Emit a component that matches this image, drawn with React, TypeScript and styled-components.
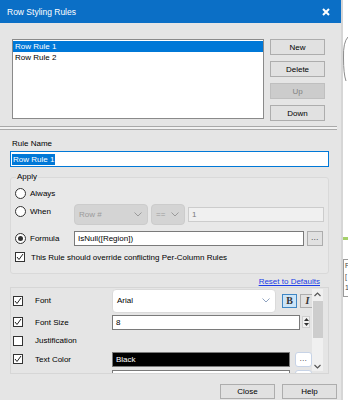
import React from 'react';
import styled, { createGlobalStyle } from 'styled-components';

const GlobalStyle = createGlobalStyle`
  html, body {
    margin: 0;
    padding: 0;
    background: #ffffff;
  }
  body {
    font-family: "Liberation Sans", Arial, sans-serif;
    font-size: 8px;
    color: #000000;
  }
  * { box-sizing: border-box; }
`;

const Screen = styled.div`
  display: flex;
  width: 348px;
  height: 400px;
  overflow: hidden;
  background: #ffffff;
`;

const Dialog = styled.div`
  flex: none;
  width: 343px;
  display: flex;
  flex-direction: column;
  background: #e5e5e5;
  border-right: 2px solid #d6d6d6;
`;

const TitleBar = styled.div`
  height: 23px;
  flex: none;
  display: flex;
  align-items: center;
  justify-content: space-between;
  padding: 0 11px 0 7px;
  background: #0b6fc6;
  color: #ffffff;
  font-size: 8.5px;
`;

const TopSection = styled.div`
  display: flex;
  padding: 16px 0 0 12px;
`;

const RuleList = styled.div`
  width: 252px;
  height: 80px;
  background: #ffffff;
  border: 1px solid #8a8a8a;
  padding-top: 1px;
`;

const ListItem = styled.div<{ $selected?: boolean }>`
  height: 11px;
  line-height: 11px;
  padding-left: 2px;
  background: ${({ $selected }) => ($selected ? '#0078d7' : 'transparent')};
  color: ${({ $selected }) => ($selected ? '#ffffff' : '#000000')};
`;

const ButtonColumn = styled.div`
  display: flex;
  flex-direction: column;
  gap: 6px;
  margin-left: 6px;
`;

const DialogButton = styled.div<{ $disabled?: boolean; $h?: number }>`
  width: 55px;
  height: ${({ $h }) => $h ?? 16}px;
  display: flex;
  align-items: center;
  justify-content: center;
  background: ${({ $disabled }) => ($disabled ? '#cccccc' : '#e1e1e1')};
  border: 1px solid ${({ $disabled }) => ($disabled ? '#bfbfbf' : '#adadad')};
  color: ${({ $disabled }) => ($disabled ? '#838383' : '#000000')};
`;

const Separator = styled.div`
  width: 337px;
  height: 4px;
  margin-top: 5px;
  border-top: 1px solid #a9a9a9;
  border-bottom: 1px solid #a9a9a9;
  background: #f2f2f2;
`;

const FieldLabel = styled.div`
  margin: 9px 0 0 12px;
  height: 10px;
  line-height: 10px;
`;

const NameInput = styled.div`
  width: 319px;
  height: 16px;
  margin: 2px 0 0 10px;
  padding: 1px 1px;
  background: #ffffff;
  border: 1px solid #0078d7;
  display: flex;
  align-items: center;
`;

const SelectedText = styled.span`
  background: #0078d7;
  color: #ffffff;
  line-height: 11px;
  padding: 0 1px;
`;

const GroupBox = styled.fieldset`
  width: 319px;
  margin: 5px 0 0 10px;
  padding: 0 0 10px 4px;
  border: 1px solid #d9d9d9;
  border-radius: 3px;
  background: #e8e8e8;
`;

const GroupLegend = styled.legend`
  height: 10px;
  line-height: 10px;
  padding: 0 1px;
  margin-left: 1px;
`;

const GroupRow = styled.div<{ $h: number; $mt: number }>`
  display: flex;
  align-items: center;
  height: ${({ $h }) => $h}px;
  margin-top: ${({ $mt }) => $mt}px;
`;

const RadioOption = styled.div<{ $lift?: number }>`
  width: 59px;
  flex: none;
  display: flex;
  align-items: center;
  gap: 4px;
  margin-bottom: ${({ $lift }) => ($lift ? $lift * 2 : 0)}px;
`;

const RadioCircle = styled.div<{ $checked?: boolean }>`
  width: 11px;
  height: 11px;
  border-radius: 50%;
  border: 1px solid #333333;
  background: #ffffff;
  display: flex;
  align-items: center;
  justify-content: center;
  &::after {
    content: '';
    width: 5px;
    height: 5px;
    border-radius: 50%;
    background: ${({ $checked }) => ($checked ? '#333333' : 'transparent')};
  }
`;

const ComboBox = styled.div<{ $w: number; $h: number; $disabled?: boolean }>`
  width: ${({ $w }) => $w}px;
  height: ${({ $h }) => $h}px;
  flex: none;
  display: flex;
  align-items: center;
  justify-content: space-between;
  padding: 0 5px 0 4px;
  border-radius: 4px;
  background: ${({ $disabled }) => ($disabled ? '#d4d4d4' : '#ffffff')};
  border: 1px solid ${({ $disabled }) => ($disabled ? '#cccccc' : '#dadada')};
  color: ${({ $disabled }) => ($disabled ? '#9b9b9b' : '#000000')};
  margin-right: 3px;
`;

const TextBox = styled.div<{ $w: number; $dark?: boolean; $disabled?: boolean }>`
  width: ${({ $w }) => $w}px;
  height: 15px;
  flex: none;
  display: flex;
  align-items: center;
  padding-left: 3px;
  background: ${({ $dark, $disabled }) => ($dark ? '#000000' : $disabled ? '#f0f0f0' : '#ffffff')};
  color: ${({ $dark, $disabled }) => ($dark ? '#ffffff' : $disabled ? '#7a7a7a' : '#000000')};
  border: 1px solid ${({ $disabled }) => ($disabled ? '#cccccc' : '#7a7a7a')};
`;

const SmallButton = styled.div<{ $w: number; $round?: boolean }>`
  width: ${({ $w }) => $w}px;
  height: 15px;
  flex: none;
  display: flex;
  align-items: center;
  justify-content: center;
  margin-left: ${({ $round }) => ($round ? 5 : 3)}px;
  background: ${({ $round }) => ($round ? '#ffffff' : '#e1e1e1')};
  border: 1px solid ${({ $round }) => ($round ? '#c7d3e6' : '#adadad')};
  border-radius: ${({ $round }) => ($round ? 3 : 0)}px;
  font-size: 7px;
  letter-spacing: 0.5px;
  padding-bottom: 2px;
`;

const CheckLine = styled.div`
  display: flex;
  align-items: center;
  gap: 6px;
`;

const CheckBox = styled.div`
  width: 10px;
  height: 10px;
  flex: none;
  border: 1px solid #333333;
  background: #ffffff;
  display: flex;
  align-items: center;
  justify-content: center;
`;

const ResetRow = styled.div`
  height: 13px;
  display: flex;
  align-items: flex-end;
  justify-content: flex-end;
  padding-right: 21px;
`;

const ResetLink = styled.span`
  color: #1a3ce6;
  text-decoration: underline;
  line-height: 10px;
`;

const PropsPanel = styled.div`
  width: 319px;
  height: 87px;
  margin-left: 10px;
  display: flex;
  border: 1px solid #d6d6d6;
  background: #e5e5e5;
`;

const PropRows = styled.div`
  flex: 1;
  overflow: hidden;
`;

const PropRow = styled.div<{ $h: number }>`
  height: ${({ $h }) => $h}px;
  display: flex;
  align-items: center;
  padding-left: 2px;
`;

const PropLabelBox = styled.div`
  display: flex;
  align-items: center;
  width: 99px;
  flex: none;
`;

const PropLabel = styled.div`
  width: 75px;
  flex: none;
  padding-left: 12px;
`;

const StyleToggle = styled.div<{ $active?: boolean; $italic?: boolean }>`
  width: 15px;
  height: 14px;
  flex: none;
  display: flex;
  align-items: center;
  justify-content: center;
  margin-left: 3px;
  font-family: "Liberation Serif", "Times New Roman", serif;
  font-weight: bold;
  font-style: ${({ $italic }) => ($italic ? 'italic' : 'normal')};
  font-size: 10px;
  color: #333333;
  background: ${({ $active }) => ($active ? '#cce4f7' : '#e1e1e1')};
  border: 1px solid ${({ $active }) => ($active ? '#3f86c4' : '#adadad')};
`;

const SpinBox = styled.div`
  width: 8px;
  height: 12px;
  margin-left: 2px;
  display: flex;
  flex-direction: column;
  justify-content: space-around;
  align-items: center;
  background: #f0f0f0;
  border: 1px solid #cfcfcf;
`;

const ScrollBar = styled.div`
  width: 11px;
  flex: none;
  margin: 1px 5px 2px 0;
  background: #f0f0f0;
  display: flex;
  flex-direction: column;
  align-items: center;
`;

const ScrollThumb = styled.div`
  width: 10px;
  height: 37px;
  margin-top: 2px;
  background: #cdcdcd;
`;

const ScrollArrow = styled.div<{ $bottom?: boolean }>`
  height: 10px;
  display: flex;
  align-items: center;
  justify-content: center;
  margin-top: ${({ $bottom }) => ($bottom ? 'auto' : '0')};
`;

const BottomBar = styled.div`
  display: flex;
  justify-content: flex-end;
  gap: 7px;
  margin-top: 10px;
  padding-right: 4px;
`;

const Backdrop = styled.div`
  flex: 1;
  display: flex;
  flex-direction: column;
`;

const BackCurve = styled.svg`
  margin-top: 36px;
`;

const BackGreen = styled.div`
  margin-top: 155px;
  height: 3px;
  width: 5px;
  background: #a5d06a;
`;

const BackBox = styled.div`
  margin-top: 19px;
  height: 38px;
  border: 1px solid #9a9a9a;
  border-right: none;
  background: #ffffff;
  color: #444444;
  font-size: 7px;
  line-height: 11px;
  padding: 0 0 0 1px;
  overflow: hidden;
`;

const Chevron = ({ color = '#8fa3c0' }: { color?: string }) => (
  <svg width="8" height="5" viewBox="0 0 8 5">
    <path d="M0.5 0.5 L4 4 L7.5 0.5" fill="none" stroke={color} strokeWidth="1" />
  </svg>
);

const Check = () => (
  <svg width="8" height="8" viewBox="0 0 8 8">
    <path d="M1 4 L3 6.5 L7 1" fill="none" stroke="#222" strokeWidth="1" />
  </svg>
);

const CloseX = () => (
  <svg width="8" height="8" viewBox="0 0 8 8">
    <path d="M1 1 L7 7 M7 1 L1 7" stroke="#ffffff" strokeWidth="2" />
  </svg>
);

const Tri = ({ up }: { up?: boolean }) => (
  <svg width="5" height="3" viewBox="0 0 5 3">
    <path d={up ? 'M0 3 L2.5 0 L5 3 Z' : 'M0 0 L2.5 3 L5 0 Z'} fill="#333" />
  </svg>
);

const ScrollChevron = ({ up }: { up?: boolean }) => (
  <svg width="7" height="5" viewBox="0 0 7 5">
    <path d={up ? 'M0.5 4 L3.5 1 L6.5 4' : 'M0.5 1 L3.5 4 L6.5 1'} fill="none" stroke="#555" strokeWidth="1.2" />
  </svg>
);

const App: React.FC = () => {
  return (
    <>
      <GlobalStyle />
      <Screen>
        <Dialog>
          <TitleBar>
            <span>Row Styling Rules</span>
            <CloseX />
          </TitleBar>

          <TopSection>
            <RuleList>
              <ListItem $selected>Row Rule 1</ListItem>
              <ListItem>Row Rule 2</ListItem>
            </RuleList>
            <ButtonColumn>
              <DialogButton>New</DialogButton>
              <DialogButton>Delete</DialogButton>
              <DialogButton $disabled>Up</DialogButton>
              <DialogButton>Down</DialogButton>
            </ButtonColumn>
          </TopSection>

          <Separator />

          <FieldLabel>Rule Name</FieldLabel>
          <NameInput>
            <SelectedText>Row Rule 1</SelectedText>
          </NameInput>

          <GroupBox>
            <GroupLegend>Apply</GroupLegend>
            <GroupRow $h={14} $mt={4}>
              <RadioOption>
                <RadioCircle />
                <span>Always</span>
              </RadioOption>
            </GroupRow>
            <GroupRow $h={22} $mt={3}>
              <RadioOption $lift={3}>
                <RadioCircle />
                <span>When</span>
              </RadioOption>
              <ComboBox $w={74} $h={21} $disabled>
                <span>Row #</span>
                <Chevron color="#9a9a9a" />
              </ComboBox>
              <ComboBox $w={34} $h={21} $disabled>
                <span>==</span>
                <Chevron color="#9a9a9a" />
              </ComboBox>
              <TextBox $w={136} $disabled>1</TextBox>
            </GroupRow>
            <GroupRow $h={15} $mt={6}>
              <RadioOption>
                <RadioCircle $checked />
                <span>Formula</span>
              </RadioOption>
              <TextBox $w={230}>IsNull([Region])</TextBox>
              <SmallButton $w={16}>...</SmallButton>
            </GroupRow>
            <GroupRow $h={12} $mt={5}>
              <CheckLine>
                <CheckBox>
                  <Check />
                </CheckBox>
                <span>This Rule should override conflicting Per-Column Rules</span>
              </CheckLine>
            </GroupRow>
          </GroupBox>

          <ResetRow>
            <ResetLink>Reset to Defaults</ResetLink>
          </ResetRow>

          <PropsPanel>
            <PropRows>
              <PropRow $h={25}>
                <PropLabelBox>
                  <CheckBox>
                    <Check />
                  </CheckBox>
                  <PropLabel>Font</PropLabel>
                </PropLabelBox>
                <ComboBox $w={164} $h={24}>
                  <span>Arial</span>
                  <Chevron />
                </ComboBox>
                <StyleToggle $active>B</StyleToggle>
                <StyleToggle $italic>I</StyleToggle>
              </PropRow>
              <PropRow $h={18}>
                <PropLabelBox>
                  <CheckBox>
                    <Check />
                  </CheckBox>
                  <PropLabel>Font Size</PropLabel>
                </PropLabelBox>
                <TextBox $w={188}>8</TextBox>
                <SpinBox>
                  <Tri up />
                  <Tri />
                </SpinBox>
              </PropRow>
              <PropRow $h={19}>
                <PropLabelBox>
                  <CheckBox />
                  <PropLabel>Justification</PropLabel>
                </PropLabelBox>
              </PropRow>
              <PropRow $h={18}>
                <PropLabelBox>
                  <CheckBox>
                    <Check />
                  </CheckBox>
                  <PropLabel>Text Color</PropLabel>
                </PropLabelBox>
                <TextBox $w={178} $dark>Black</TextBox>
                <SmallButton $w={17} $round>...</SmallButton>
              </PropRow>
              <PropRow $h={18}>
                <PropLabelBox />
                <TextBox $w={178} />
                <SmallButton $w={17} $round />
              </PropRow>
            </PropRows>
            <ScrollBar>
              <ScrollArrow>
                <ScrollChevron up />
              </ScrollArrow>
              <ScrollThumb />
              <ScrollArrow $bottom>
                <ScrollChevron />
              </ScrollArrow>
            </ScrollBar>
          </PropsPanel>

          <BottomBar>
            <DialogButton $h={15}>Close</DialogButton>
            <DialogButton $h={15}>Help</DialogButton>
          </BottomBar>
        </Dialog>

        <Backdrop>
          <BackCurve width="5" height="46" viewBox="0 0 5 46">
            <path d="M5 1 Q0 6 0.5 22 Q0.5 38 3 45" fill="none" stroke="#8c8c8c" strokeWidth="1" />
          </BackCurve>
          <BackGreen />
          <BackBox>
            <div>F</div>
            <div>[</div>
            <div>1</div>
          </BackBox>
        </Backdrop>
      </Screen>
    </>
  );
};

export default App;
